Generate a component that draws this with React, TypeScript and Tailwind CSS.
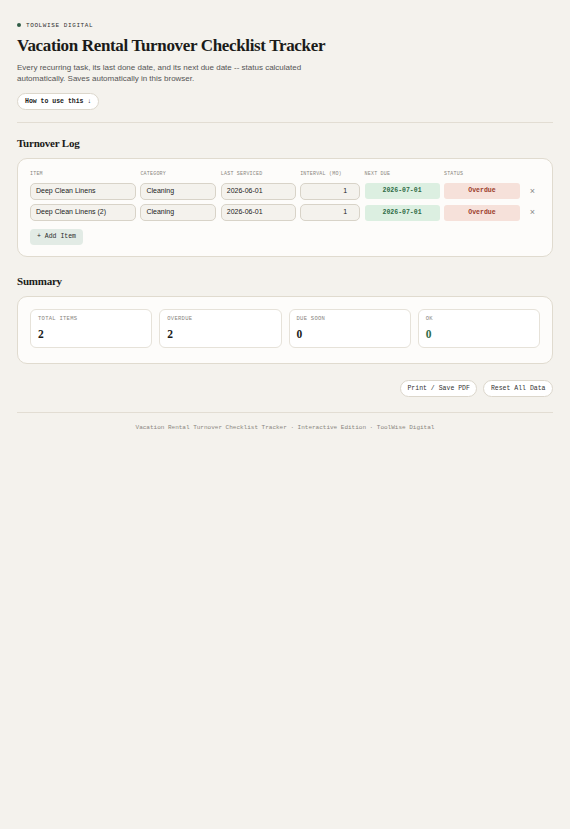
import React from "react";

const mono = "font-['Liberation_Mono','DejaVu_Sans_Mono',monospace]";
const serif = "font-['Liberation_Serif','DejaVu_Serif',serif]";
const sans = "font-['Liberation_Sans',Arial,sans-serif]";

const ROWS = [
  { item: "Deep Clean Linens", category: "Cleaning", last: "2026-06-01", interval: "1", next: "2026-07-01", status: "Overdue" },
  { item: "Deep Clean Linens (2)", category: "Cleaning", last: "2026-06-01", interval: "1", next: "2026-07-01", status: "Overdue" },
];

const STATS = [
  { label: "Total Items", value: "2", green: false },
  { label: "Overdue", value: "2", green: false },
  { label: "Due Soon", value: "0", green: false },
  { label: "OK", value: "0", green: true },
];

const cols = "grid grid-cols-[106px_76px_75px_60px_75px_76px_16px] gap-x-[4.4px] items-center";

function Field({ children, right }: { children: React.ReactNode; right?: boolean }) {
  return (
    <div
      className={`h-[17px] rounded-[5px] border border-[#d8d3c8] bg-[#f4f2ed] px-[5px] flex items-center text-[7px] text-[#222] ${sans} ${right ? "justify-end pr-[12px]" : ""}`}
    >
      {children}
    </div>
  );
}

export default function App() {
  return (
    <div className={`min-h-[829px] bg-[#f4f2ed] text-[#1b1b19] ${sans}`}>
      <div className="mx-auto w-[570px] px-[17px] pt-[21px] pb-6">
        <div className={`flex h-[8px] items-center gap-[5px] text-[6px] tracking-[0.1em] text-[#333] ${mono}`}>
          <span className="h-[4px] w-[4px] rounded-full bg-[#2f5d46]" />
          TOOLWISE DIGITAL
        </div>
        <h1 className={`mt-[7px] text-[17px] leading-[20px] font-bold tracking-[-0.02em] ${serif}`}>
          Vacation Rental Turnover Checklist Tracker
        </h1>
        <p className="mt-[5.5px] w-[300px] text-[8px] leading-[11px] text-[#555]">
          Every recurring task, its last done date, and its next due date -- status calculated automatically. Saves automatically in this browser.
        </p>
        <button
          type="button"
          className={`mt-[9.5px] h-[17px] rounded-full border border-[#dcd7cc] bg-white px-[7px] text-[6.5px] font-bold text-[#222] ${mono}`}
        >
          How to use this ↓
        </button>
        <div className="mt-[12px] border-t border-[#e2ddd3]" />

        <h2 className={`mt-[13px] text-[11px] leading-[14px] font-bold tracking-[-0.02em] ${serif}`}>Turnover Log</h2>
        <div className="mt-[8px] rounded-[10px] border border-[#e0dbcf] bg-[#fdfcfa] px-[12px] pt-[11.5px] pb-[11px]">
          <div className={`${cols} h-[7px] text-[5px] leading-[7px] tracking-[0.04em] text-[#8a8680] ${mono}`}>
            <span>ITEM</span>
            <span>CATEGORY</span>
            <span>LAST SERVICED</span>
            <span>INTERVAL (MO)</span>
            <span>NEXT DUE</span>
            <span>STATUS</span>
            <span />
          </div>
          <div className="mt-[5px] flex flex-col gap-[4.5px]">
            {ROWS.map((r) => (
              <div key={r.item} className={cols}>
                <Field>{r.item}</Field>
                <Field>{r.category}</Field>
                <Field>{r.last}</Field>
                <Field right>{r.interval}</Field>
                <div className={`h-[16px] rounded-[3px] bg-[#dcefe1] flex items-center justify-center text-[6.5px] font-bold text-[#2e6b45] ${mono}`}>
                  {r.next}
                </div>
                <div className={`h-[16px] rounded-[3px] bg-[#f6e1da] flex items-center justify-center text-[6.5px] font-bold text-[#9b3b2b] ${mono}`}>
                  {r.status}
                </div>
                <span className="flex justify-center text-[9px] leading-none text-[#888]">×</span>
              </div>
            ))}
          </div>
          <button
            type="button"
            className={`mt-[8px] h-[16px] rounded-[4px] bg-[#e2ebe5] px-[7px] text-[6.5px] text-[#2a2a2a] ${mono}`}
          >
            + Add Item
          </button>
        </div>

        <h2 className={`mt-[17px] text-[11px] leading-[14px] font-bold tracking-[-0.02em] ${serif}`}>Summary</h2>
        <div className="mt-[8px] rounded-[10px] border border-[#e0dbcf] bg-[#fdfcfa] px-[12px] pt-[12px] pb-[15px]">
          <div className="grid grid-cols-4 gap-[7px]">
            {STATS.map((s) => (
              <div key={s.label} className="h-[39px] rounded-[6px] border border-[#e6e2d9] bg-white px-[7px] pt-[6px]">
                <div className={`text-[5.5px] leading-[6px] tracking-[0.05em] text-[#8a8680] uppercase ${mono}`}>{s.label}</div>
                <div className={`mt-[5.5px] text-[11.5px] font-bold leading-[13px] ${serif} ${s.green ? "text-[#2f6b48]" : "text-[#1b1b19]"}`}>
                  {s.value}
                </div>
              </div>
            ))}
          </div>
        </div>

        <div className="mt-[16px] flex justify-end gap-[6px]">
          <button type="button" className={`h-[17px] rounded-full border border-[#dcd7cc] bg-white px-[6.5px] text-[6.5px] text-[#333] ${mono}`}>
            Print / Save PDF
          </button>
          <button type="button" className={`h-[17px] rounded-full border border-[#dcd7cc] bg-white px-[6.5px] text-[6.5px] text-[#333] ${mono}`}>
            Reset All Data
          </button>
        </div>
        <div className="mt-[15px] border-t border-[#e2ddd3]" />
        <p className={`mt-[11px] text-center text-[6px] leading-[8px] text-[#8a8680] ${mono}`}>
          Vacation Rental Turnover Checklist Tracker · Interactive Edition · ToolWise Digital
        </p>
      </div>
    </div>
  );
}
